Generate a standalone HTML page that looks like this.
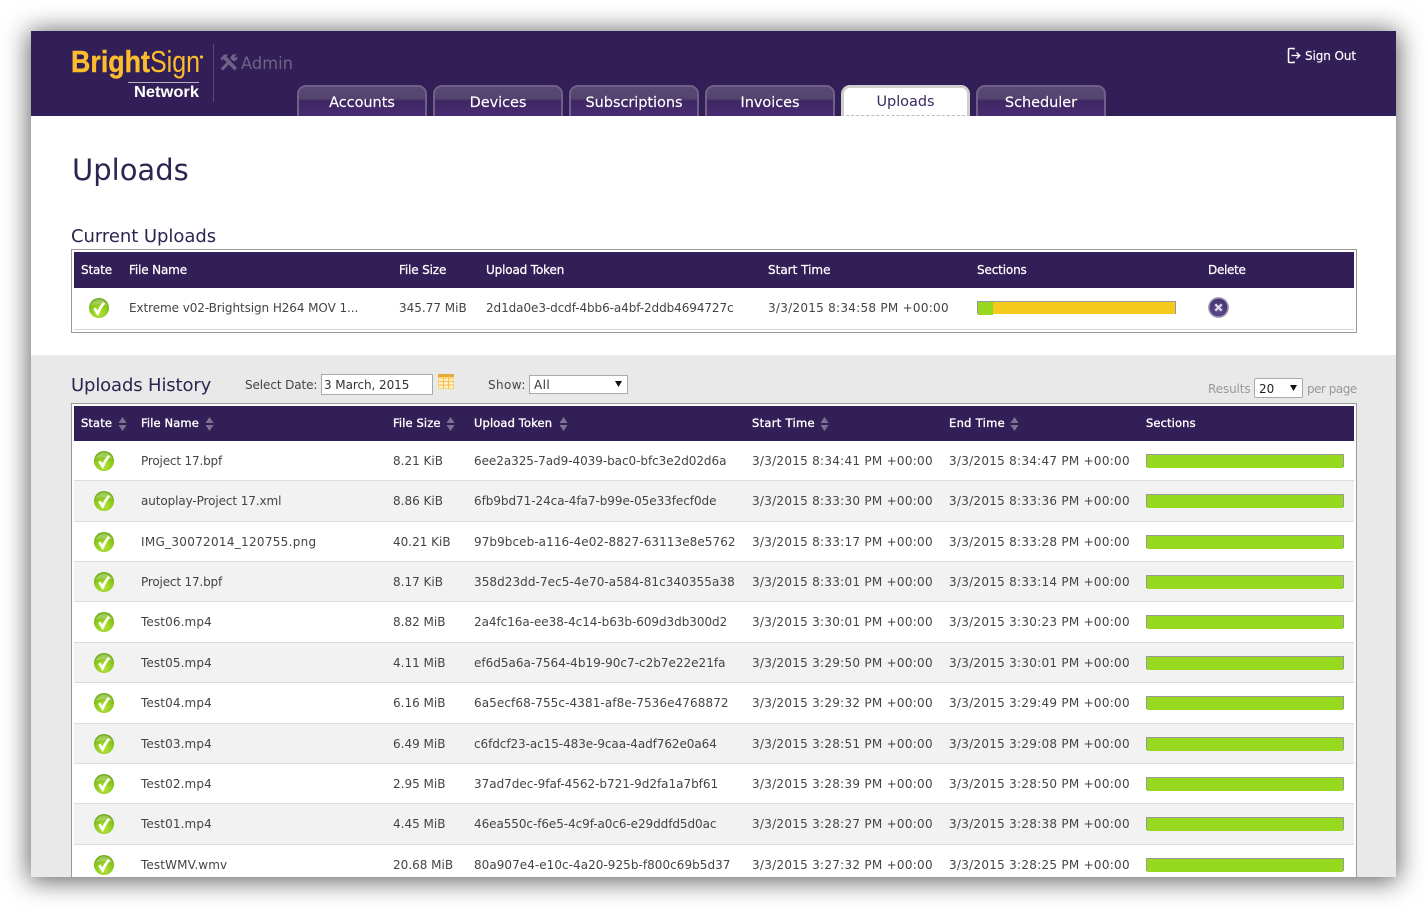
<!DOCTYPE html>
<html><head><meta charset="utf-8"><title>Uploads</title>
<style>
html,body{margin:0;padding:0;width:1426px;height:907px;background:#fff;overflow:hidden}
*{box-sizing:border-box}
body{font:12px/16px "DejaVu Sans",sans-serif;color:#444}
.t{position:absolute;white-space:nowrap}
#app{position:absolute;left:31px;top:31px;width:1365px;height:846px;box-shadow:0 2px 24px 2px rgba(0,0,0,.62)}
#clip{position:absolute;left:0;top:0;width:1426px;height:877px;overflow:hidden}
.abs{position:absolute}
.tab{position:absolute;top:85px;width:130px;height:31px;border:2px solid #6f6089;border-bottom:0;border-radius:9px 9px 0 0;background:linear-gradient(#584874 0,#54446f 40%,#3f2763 48%,#482b72 100%);color:#fff;font:14.5px/32px "DejaVu Sans",sans-serif;text-align:center;letter-spacing:-.05px;-webkit-text-stroke:.15px #fff}
.tab.on{background:#fff;color:#3a2b60;border:3px solid #cfcfcf;border-bottom:1px dashed #bbb;line-height:29px;-webkit-text-stroke:0}
.hd{position:absolute;left:74px;width:1280px;background:#331f57}
.h{position:absolute;color:#fff;font-size:12px;line-height:16px;white-space:nowrap;-webkit-text-stroke:.25px #fff;letter-spacing:-.15px}
.h2{font-size:11.5px;letter-spacing:.12px;-webkit-text-stroke:.35px #fff}
.r{position:absolute;left:74px;width:1280px;border-bottom:1px solid #dcdcdc;background:#fff}
.r.g{background:#f2f2f2}
.r span{position:absolute;top:12px;white-space:nowrap;line-height:16px}
.n{left:67px;letter-spacing:.12px}.s{left:319px}.k{left:400px}.a{left:678px;letter-spacing:.27px}.e{left:875px;letter-spacing:.27px}
.r svg{position:absolute;left:20px;top:10px;width:20px;height:20px}
.b{position:absolute;left:1072px;top:13px;width:198px;height:13px;background:#97d91f;border:1px solid #999;border-bottom:0}
.b:after{content:"";position:absolute;left:0;right:0;bottom:-1px;height:1px;background:#97d91f}
.so{position:absolute;width:9px;height:16px}
</style></head><body>
<svg width="0" height="0" style="position:absolute"><defs>
<radialGradient id="gg" cx=".5" cy=".75" r=".7"><stop offset="0" stop-color="#b9e33c"/><stop offset=".6" stop-color="#8ecb1e"/><stop offset="1" stop-color="#6ca812"/></radialGradient>
<radialGradient id="dg" cx=".5" cy=".7" r=".7"><stop offset="0" stop-color="#5f4d90"/><stop offset="1" stop-color="#43316f"/></radialGradient>
<symbol id="ok" viewBox="0 0 20 20"><circle cx="10" cy="10" r="10" fill="url(#gg)"/><path d="M1.5 8C3 3.5 6.500 1.200 10 1.200S17 3.500 18.500 8C14 5.500 6 5.500 1.500 8Z" fill="#fff" opacity=".28"/><path d="M5.300 10.300L8.600 15.300C10.300 11.300 12.300 7.900 15.200 4.800" fill="none" stroke="#fff" stroke-width="2.700"/></symbol>
<symbol id="srt" viewBox="0 0 9 16"><path d="M4.500 1L8.500 7H.5ZM4.500 15L.5 9H8.500Z" fill="#7d7191"/></symbol>
</defs></svg>
<div id="app"></div>
<div id="clip">
<div class="abs" style="left:31px;top:31px;width:1365px;height:85px;background:#331f57"></div>
<div class="abs" style="left:31px;top:116px;width:1365px;height:239px;background:#fff"></div>
<div class="abs" style="left:31px;top:355px;width:1365px;height:522px;background:#e9e9e9"></div>

<svg class="abs" style="left:60px;top:40px" width="240" height="70" viewBox="60 40 240 70">
<text x="71" y="72" font-family="Liberation Sans" font-weight="700" font-size="31" fill="#fcbd2c" stroke="#fcbd2c" stroke-width=".4" textLength="79" lengthAdjust="spacingAndGlyphs">Bright</text>
<text x="150" y="72" font-family="Liberation Sans" font-size="31" fill="#fcbd2c" textLength="50" lengthAdjust="spacingAndGlyphs">Sign</text>
<circle cx="201.500" cy="57" r="1.600" fill="#fcbd2c"/>
<rect x="128" y="82" width="71" height="1" fill="#b5aec5"/>
<text x="134" y="97" font-family="Liberation Sans" font-weight="700" font-size="15.500" fill="#fff" textLength="65" lengthAdjust="spacingAndGlyphs">Network</text>
<rect x="213" y="44" width="1" height="58" fill="#5b4a78"/>
<path d="M220.500 58.500L224 54.500L228 54.500L226.500 56.500L237 68L234.500 70.500L223.500 59L222 60.500ZM220.500 68.500L228.500 60.500L230.500 62.500L223 70.500ZM230 58L232.500 54.500L236.500 54L234.500 56.500L235 58L237.500 56.500L237 60L233.500 61.500L232 60Z" fill="#6f6385"/>
<text x="241" y="69" font-family="DejaVu Sans" font-size="17" fill="#6f6385" textLength="52" lengthAdjust="spacingAndGlyphs">Admin</text>
</svg>

<svg class="abs" style="left:1287px;top:47px" width="15" height="17" viewBox="0 0 15 17"><path d="M7 2.500V1.500H2.500Q1.500 1.500 1.500 2.500V14.500Q1.500 15.500 2.500 15.500H7V14.500" fill="none" stroke="#fff" stroke-width="1.500"/><path d="M4.500 8.500H12M9.500 5.500L12.800 8.500L9.500 11.500" fill="none" stroke="#fff" stroke-width="1.300"/></svg>
<div class="t" style="left:1305px;top:48px;color:#fff;font-size:12px;letter-spacing:-.1px;-webkit-text-stroke:.15px #fff">Sign Out</div>

<div class="tab" style="left:297px">Accounts</div>
<div class="tab" style="left:433px">Devices</div>
<div class="tab" style="left:569px">Subscriptions</div>
<div class="tab" style="left:705px">Invoices</div>
<div class="tab on" style="left:841px;width:129px">Uploads</div>
<div class="tab" style="left:976px">Scheduler</div>

<div class="t" style="left:72px;top:151px;font-size:29px;line-height:38px;color:#2e2450">Uploads</div>
<div class="t" style="left:71px;top:225px;font-size:18px;line-height:23px;color:#2e2450;letter-spacing:-.05px">Current Uploads</div>

<div class="abs" style="left:71px;top:249px;width:1286px;height:84px;border:1px solid #999;background:#fff"></div>
<div class="hd" style="top:252px;height:36px"></div>
<div class="h" style="left:81px;top:262px">State</div>
<div class="h" style="left:129px;top:262px">File Name</div>
<div class="h" style="left:399px;top:262px">File Size</div>
<div class="h" style="left:486px;top:262px">Upload Token</div>
<div class="h" style="left:768px;top:262px;letter-spacing:0">Start Time</div>
<div class="h" style="left:977px;top:262px">Sections</div>
<div class="h" style="left:1208px;top:262px;letter-spacing:-.3px">Delete</div>
<div class="abs" style="left:74px;top:329px;width:1280px;height:1px;background:#d5d5d5"></div>
<svg class="abs" style="left:88.500px;top:298px" width="20" height="20"><use href="#ok"/></svg>
<div class="t" style="left:129px;top:300px;letter-spacing:-.08px">Extreme v02-Brightsign H264 MOV 1...</div>
<div class="t" style="left:399px;top:300px">345.77 MiB</div>
<div class="t" style="left:486px;top:300px;letter-spacing:-.08px">2d1da0e3-dcdf-4bb6-a4bf-2ddb4694727c</div>
<div class="t" style="left:768px;top:300px;letter-spacing:.27px">3/3/2015 8:34:58 PM +00:00</div>
<div class="abs" style="left:977px;top:301px;width:199px;height:13px;background:#f6ca1d;border:1px solid #999;border-bottom:0"><div class="abs" style="left:0;top:0;width:15px;height:13px;background:#97d91f"></div></div>
<svg class="abs" style="left:1208px;top:297px" width="21" height="21" viewBox="0 0 21 21"><circle cx="10.500" cy="10.500" r="10.400" fill="#9a93b0"/><circle cx="10.500" cy="10.500" r="8.800" fill="url(#dg)"/><path d="M7.300 7.300L13.700 13.700M13.700 7.300L7.300 13.700" stroke="#dcd8e6" stroke-width="2.400"/></svg>

<div class="t" style="left:71px;top:374px;font-size:18px;line-height:23px;color:#2e2450;letter-spacing:-.14px">Uploads History</div>
<div class="t" style="left:245px;top:377px;letter-spacing:-.1px">Select Date:</div>
<div class="abs" style="left:321px;top:374px;width:112px;height:21px;background:#fff;border:1px solid #aaa"></div>
<div class="t" style="left:324px;top:377px;color:#333;letter-spacing:-.07px">3 March, 2015</div>
<svg class="abs" style="left:438px;top:374px" width="16" height="15" viewBox="0 0 16 15"><rect width="16" height="15" fill="#fbd67a"/><rect y="0" width="16" height="3" fill="#e9a93a"/><path d="M1 5h14v9H1z" fill="#fff1c8"/><path d="M5.500 4v11M10.500 4v11M0 7.500h16M0 11h16" stroke="#f3bf55" stroke-width="1"/></svg>
<div class="t" style="left:488px;top:377px;letter-spacing:.4px">Show:</div>
<div class="abs" style="left:529px;top:375px;width:99px;height:19px;background:#fff;border:1px solid #aaa"></div>
<div class="t" style="left:534px;top:377px;color:#333;letter-spacing:.4px">All</div>
<svg class="abs" style="left:615px;top:381px" width="7" height="6"><path d="M0 0H7L3.500 6Z" fill="#111"/></svg>
<div class="t" style="left:1208px;top:381px;color:#999;letter-spacing:-.12px">Results</div>
<div class="abs" style="left:1254px;top:378px;width:49px;height:20px;background:#fff;border:1px solid #aaa;border-radius:2px"></div>
<div class="t" style="left:1259px;top:381px;color:#222">20</div>
<svg class="abs" style="left:1290px;top:385px" width="7" height="6"><path d="M0 0H7L3.500 6Z" fill="#111"/></svg>
<div class="t" style="left:1307px;top:381px;color:#999;letter-spacing:-.5px">per page</div>

<div class="abs" style="left:71px;top:403px;width:1286px;height:480px;border:1px solid #999;background:#fff"></div>
<div class="hd" style="top:406px;height:35px"></div>
<div class="h h2" style="left:81px;top:415px">State</div><svg class="so" style="left:118px;top:416px"><use href="#srt"/></svg>
<div class="h h2" style="left:141px;top:415px">File Name</div><svg class="so" style="left:205px;top:416px"><use href="#srt"/></svg>
<div class="h h2" style="left:393px;top:415px">File Size</div><svg class="so" style="left:446px;top:416px"><use href="#srt"/></svg>
<div class="h h2" style="left:474px;top:415px">Upload Token</div><svg class="so" style="left:559px;top:416px"><use href="#srt"/></svg>
<div class="h h2" style="left:752px;top:415px;letter-spacing:.3px">Start Time</div><svg class="so" style="left:820px;top:416px"><use href="#srt"/></svg>
<div class="h h2" style="left:949px;top:415px;letter-spacing:.3px">End Time</div><svg class="so" style="left:1010px;top:416px"><use href="#srt"/></svg>
<div class="h h2" style="left:1146px;top:415px">Sections</div>

<div class="r" style="top:441px;height:40px"><svg><use href="#ok"/></svg><span class="n" style="letter-spacing:-.17px">Project 17.bpf</span><span class="s">8.21 KiB</span><span class="k" style="letter-spacing:-.05px">6ee2a325-7ad9-4039-bac0-bfc3e2d02d6a</span><span class="a">3/3/2015 8:34:41 PM +00:00</span><span class="e">3/3/2015 8:34:47 PM +00:00</span><div class="b"></div></div>
<div class="r g" style="top:481px;height:41px"><svg><use href="#ok"/></svg><span class="n" style="letter-spacing:-.1px">autoplay-Project 17.xml</span><span class="s">8.86 KiB</span><span class="k" style="letter-spacing:-.05px">6fb9bd71-24ca-4fa7-b99e-05e33fecf0de</span><span class="a">3/3/2015 8:33:30 PM +00:00</span><span class="e">3/3/2015 8:33:36 PM +00:00</span><div class="b"></div></div>
<div class="r" style="top:522px;height:40px"><svg><use href="#ok"/></svg><span class="n" style="letter-spacing:.29px">IMG_30072014_120755.png</span><span class="s">40.21 KiB</span><span class="k" style="letter-spacing:.065px">97b9bceb-a116-4e02-8827-63113e8e5762</span><span class="a">3/3/2015 8:33:17 PM +00:00</span><span class="e">3/3/2015 8:33:28 PM +00:00</span><div class="b"></div></div>
<div class="r g" style="top:562px;height:40px"><svg><use href="#ok"/></svg><span class="n" style="letter-spacing:-.17px">Project 17.bpf</span><span class="s">8.17 KiB</span><span class="k" style="letter-spacing:.065px">358d23dd-7ec5-4e70-a584-81c340355a38</span><span class="a">3/3/2015 8:33:01 PM +00:00</span><span class="e">3/3/2015 8:33:14 PM +00:00</span><div class="b"></div></div>
<div class="r" style="top:602px;height:41px"><svg><use href="#ok"/></svg><span class="n">Test06.mp4</span><span class="s">8.82 MiB</span><span class="k" style="letter-spacing:-.05px">2a4fc16a-ee38-4c14-b63b-609d3db300d2</span><span class="a">3/3/2015 3:30:01 PM +00:00</span><span class="e">3/3/2015 3:30:23 PM +00:00</span><div class="b"></div></div>
<div class="r g" style="top:643px;height:40px"><svg><use href="#ok"/></svg><span class="n">Test05.mp4</span><span class="s">4.11 MiB</span><span class="k" style="letter-spacing:.01px">ef6d5a6a-7564-4b19-90c7-c2b7e22e21fa</span><span class="a">3/3/2015 3:29:50 PM +00:00</span><span class="e">3/3/2015 3:30:01 PM +00:00</span><div class="b"></div></div>
<div class="r" style="top:683px;height:41px"><svg><use href="#ok"/></svg><span class="n">Test04.mp4</span><span class="s">6.16 MiB</span><span class="k" style="letter-spacing:.09px">6a5ecf68-755c-4381-af8e-7536e4768872</span><span class="a">3/3/2015 3:29:32 PM +00:00</span><span class="e">3/3/2015 3:29:49 PM +00:00</span><div class="b"></div></div>
<div class="r g" style="top:724px;height:40px"><svg><use href="#ok"/></svg><span class="n">Test03.mp4</span><span class="s">6.49 MiB</span><span class="k" style="letter-spacing:-.07px">c6fdcf23-ac15-483e-9caa-4adf762e0a64</span><span class="a">3/3/2015 3:28:51 PM +00:00</span><span class="e">3/3/2015 3:29:08 PM +00:00</span><div class="b"></div></div>
<div class="r" style="top:764px;height:40px"><svg><use href="#ok"/></svg><span class="n">Test02.mp4</span><span class="s">2.95 MiB</span><span class="k" style="letter-spacing:-.02px">37ad7dec-9faf-4562-b721-9d2fa1a7bf61</span><span class="a">3/3/2015 3:28:39 PM +00:00</span><span class="e">3/3/2015 3:28:50 PM +00:00</span><div class="b"></div></div>
<div class="r g" style="top:804px;height:41px"><svg><use href="#ok"/></svg><span class="n">Test01.mp4</span><span class="s">4.45 MiB</span><span class="k" style="letter-spacing:-.07px">46ea550c-f6e5-4c9f-a0c6-e29ddfd5d0ac</span><span class="a">3/3/2015 3:28:27 PM +00:00</span><span class="e">3/3/2015 3:28:38 PM +00:00</span><div class="b"></div></div>
<div class="r" style="top:845px;height:40px"><svg><use href="#ok"/></svg><span class="n">TestWMV.wmv</span><span class="s">20.68 MiB</span><span class="k" style="letter-spacing:.04px">80a907e4-e10c-4a20-925b-f800c69b5d37</span><span class="a">3/3/2015 3:27:32 PM +00:00</span><span class="e">3/3/2015 3:28:25 PM +00:00</span><div class="b"></div></div>
</div>
</body></html>
